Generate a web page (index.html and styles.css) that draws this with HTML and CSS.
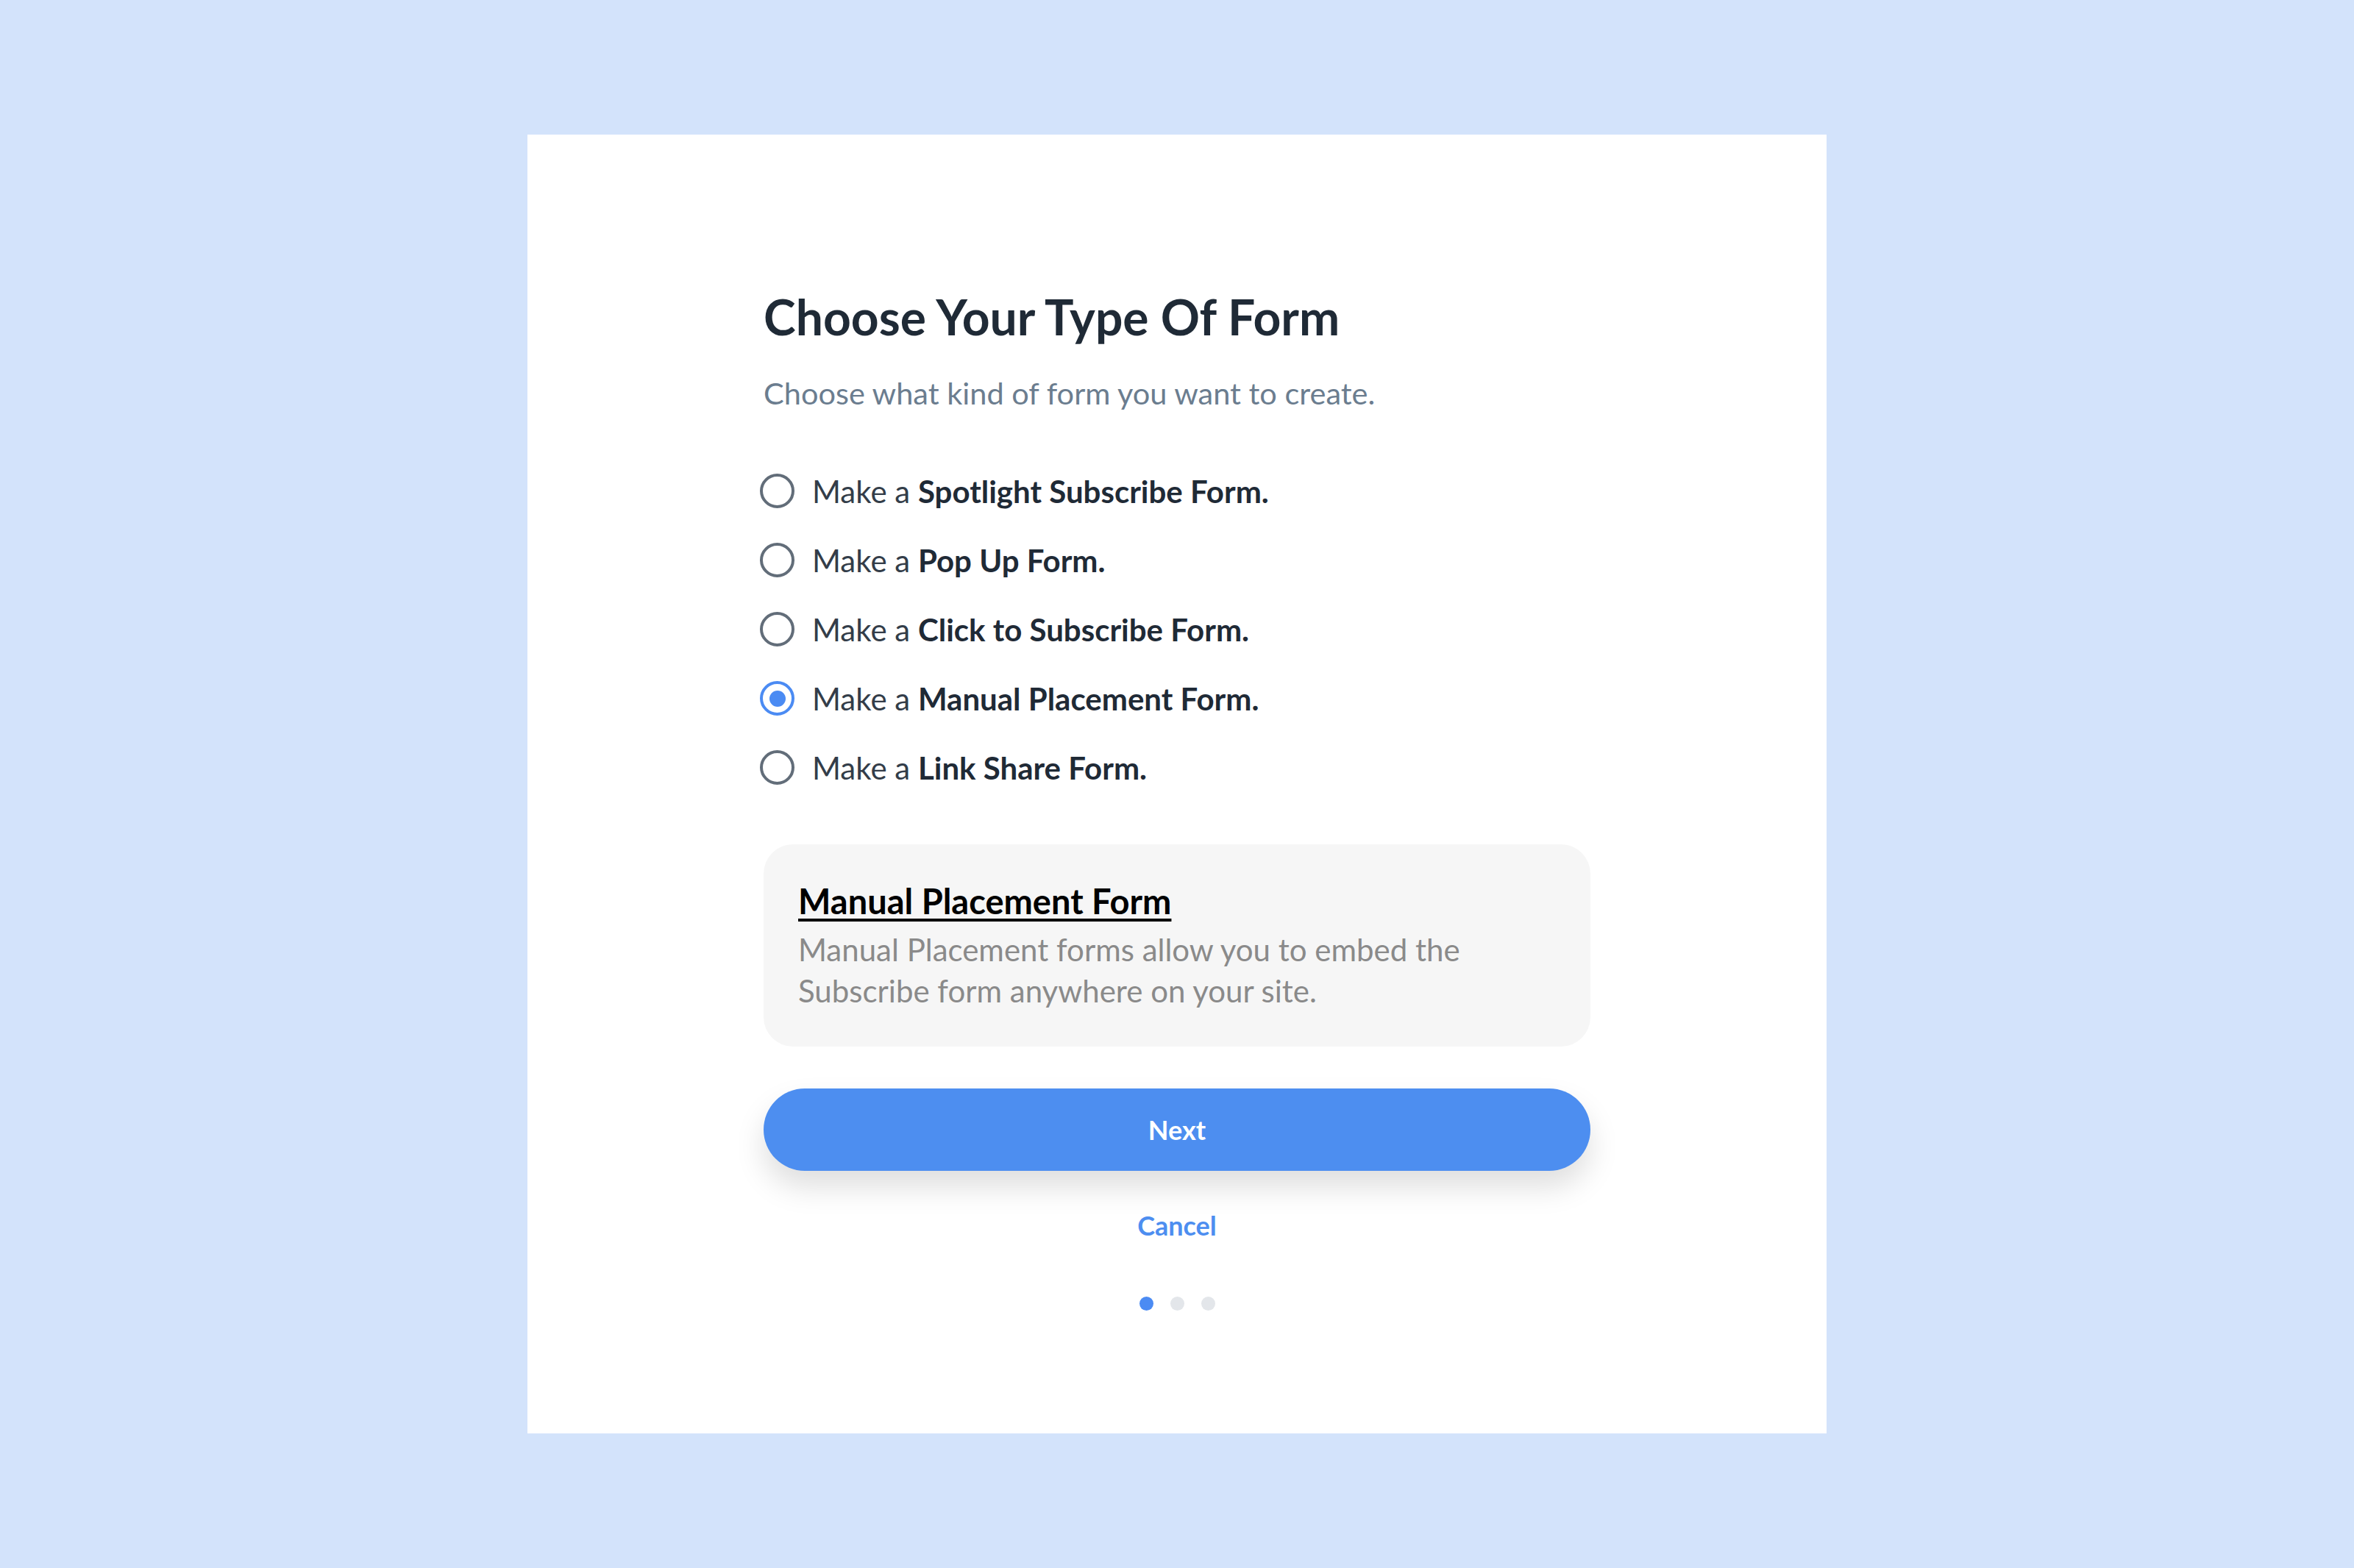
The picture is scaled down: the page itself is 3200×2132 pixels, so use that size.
FILE: index.html
```html
<!DOCTYPE html>
<html lang="en">
<head>
  <meta charset="UTF-8">
  <meta name="viewport" content="width=device-width, initial-scale=1.0">
  <title>Choose Your Type Of Form</title>
  <link rel="stylesheet" href="styles.css">
</head>
<body>
  <div class="card">
    <div class="content">
      <h1 class="title">Choose Your Type Of Form</h1>
      <p class="subtitle">Choose what kind of form you want to create.</p>
      <form class="options" id="typeForm">
        <label class="option">
          <input type="radio" name="type" value="spotlight">
          <span>Make a <b>Spotlight Subscribe Form.</b></span>
        </label>
        <label class="option">
          <input type="radio" name="type" value="popup">
          <span>Make a <b>Pop Up Form.</b></span>
        </label>
        <label class="option">
          <input type="radio" name="type" value="click">
          <span>Make a <b>Click to Subscribe Form.</b></span>
        </label>
        <label class="option">
          <input type="radio" name="type" value="manual" checked>
          <span>Make a <b>Manual Placement Form.</b></span>
        </label>
        <label class="option">
          <input type="radio" name="type" value="link">
          <span>Make a <b>Link Share Form.</b></span>
        </label>
      </form>
      <div class="info">
        <h2 class="info-title">Manual Placement Form</h2>
        <p class="info-text">Manual Placement forms allow you to embed the<br>Subscribe form anywhere on your site.</p>
      </div>
      <button type="button" class="next">Next</button>
      <a href="#" class="cancel">Cancel</a>
      <div class="dots">
        <span class="dot active"></span>
        <span class="dot"></span>
        <span class="dot"></span>
      </div>
    </div>
  </div>
</body>
</html>
```

FILE: styles.css
```css
body {
  margin: 0;
  min-height: 100vh;
  display: flex;
  align-items: center;
  justify-content: center;
  background-color: #d3e3fb;
  font-family: Lato, "Noto Sans", sans-serif;
}
.card {
  width: 1766px;
  height: 1766px;
  box-sizing: border-box;
  padding: 208px 321px 0;
  background-color: #ffffff;
}
.content {
  display: flex;
  flex-direction: column;
}
.title {
  margin: 0;
  font-size: 66px;
  line-height: 1.2;
  font-weight: 700;
  color: #1f2a36;
}
.subtitle {
  margin: 40px 0 0;
  font-size: 41.5px;
  line-height: 1.2;
  color: #6b7d8f;
}
.options {
  margin-top: 84px;
  display: flex;
  flex-direction: column;
  gap: 46px;
}
.option {
  display: flex;
  align-items: center;
  gap: 24px;
  height: 48px;
  font-size: 42px;
  color: #333d49;
  cursor: pointer;
}
.option b {
  color: #1f2a36;
}
.option input {
  appearance: none;
  margin: 0 0 0 -5px;
  width: 47px;
  height: 47px;
  box-sizing: border-box;
  border: 4px solid #626d79;
  border-radius: 50%;
  display: flex;
  align-items: center;
  justify-content: center;
}
.option input:checked {
  border-color: #4b8bf3;
}
.option input:checked::after {
  content: "";
  width: 22px;
  height: 22px;
  border-radius: 50%;
  background-color: #4b8bf3;
}
.info {
  margin-top: 80px;
  padding: 49px 47px 48px;
  background-color: #f6f6f6;
  border-radius: 40px;
}
.info-title {
  margin: 0;
  font-size: 47px;
  line-height: 1.2;
  font-weight: 700;
  color: #000000;
  text-decoration: underline;
  text-decoration-thickness: 4px;
  text-underline-offset: 6px;
}
.info-text {
  margin: 10px 0 0;
  font-size: 42px;
  line-height: 56px;
  color: #8a8a8a;
}
.next {
  margin-top: 57px;
  height: 112px;
  border: none;
  border-radius: 56px;
  background-color: #4d8ef0;
  color: #ffffff;
  font-family: inherit;
  font-size: 36px;
  font-weight: 700;
  box-shadow: 0 22px 40px rgba(0, 0, 0, 0.13);
  cursor: pointer;
}
.cancel {
  margin-top: 53px;
  align-self: center;
  font-size: 36px;
  line-height: 1.2;
  font-weight: 700;
  color: #4d8ef0;
  text-decoration: none;
}
.dots {
  margin-top: 74px;
  display: flex;
  justify-content: center;
  gap: 23px;
}
.dot {
  width: 19px;
  height: 19px;
  border-radius: 50%;
  background-color: #e3e6ea;
}
.dot.active {
  background-color: #4b8bf3;
}
```
